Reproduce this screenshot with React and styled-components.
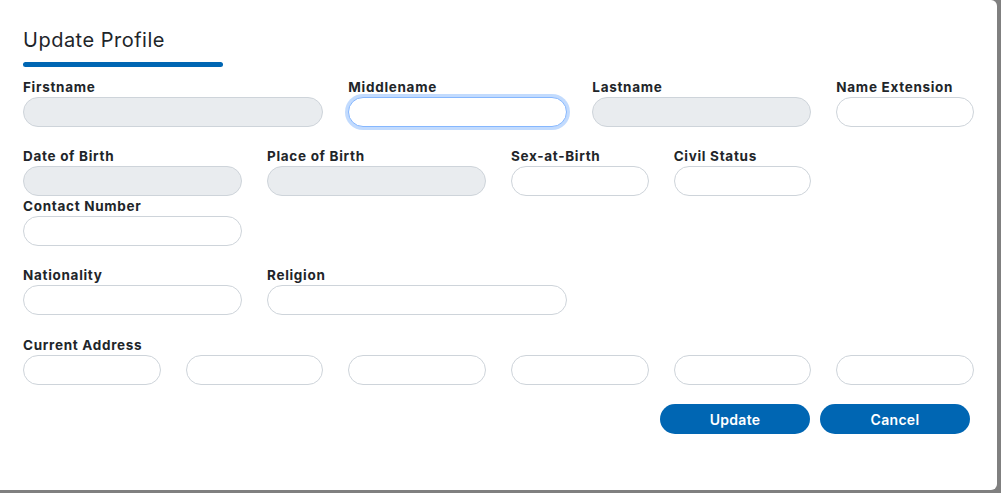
import { createGlobalStyle } from "styled-components";
import styled from "styled-components";

const GlobalStyle = createGlobalStyle`
  html, body {
    margin: 0;
    padding: 0;
    background: #808080;
  }
  body {
    font-family: "Inter", "Noto Sans", sans-serif;
    color: #212529;
  }
`;

export default function App() {
    return (
        <>
            <GlobalStyle />
            <Modal>
                <Title>Update Profile</Title>
                <TitleBar />
                <Form>
                    <Section>
                        <Field $span={4}>
                            <Label>Firstname</Label>
                            <Input disabled />
                        </Field>
                        <Field $span={3}>
                            <Label>Middlename</Label>
                            <Input $focused />
                        </Field>
                        <Field $span={3}>
                            <Label>Lastname</Label>
                            <Input disabled />
                        </Field>
                        <Field $span={2}>
                            <Label>Name Extension</Label>
                            <Input />
                        </Field>
                    </Section>

                    <Section $rowGap={1}>
                        <Field $span={3}>
                            <Label>Date of Birth</Label>
                            <Input disabled />
                        </Field>
                        <Field $span={3}>
                            <Label>Place of Birth</Label>
                            <Input disabled />
                        </Field>
                        <Field $span={2}>
                            <Label>Sex-at-Birth</Label>
                            <Input />
                        </Field>
                        <Field $span={2}>
                            <Label>Civil Status</Label>
                            <Input />
                        </Field>
                        <Field $span={3} $newRow>
                            <Label>Contact Number</Label>
                            <Input />
                        </Field>
                    </Section>

                    <Section>
                        <Field $span={3}>
                            <Label>Nationality</Label>
                            <Input />
                        </Field>
                        <Field $span={4}>
                            <Label>Religion</Label>
                            <Input />
                        </Field>
                    </Section>

                    <Section $top={1}>
                        <Field $span={12}>
                            <Label>Current Address</Label>
                        </Field>
                        {[0, 1, 2, 3, 4, 5].map((i) => (
                            <Field key={i} $span={2}>
                                <Input />
                            </Field>
                        ))}
                    </Section>
                </Form>
                <Actions>
                    <Button>Update</Button>
                    <Button>Cancel</Button>
                </Actions>
            </Modal>
        </>
    );
}

const Modal = styled.div`
  box-sizing: border-box;
  width: 997px;
  height: 490px;
  background: #fff;
  border-radius: 0 6px 6px 0;
  padding: 24px 26px 0 23px;
`;

const Title = styled.h2`
  margin: 0;
  font-size: 20px;
  font-weight: 400;
  line-height: 32px;
  letter-spacing: 0.5px;
  color: #212529;
`;

const TitleBar = styled.div`
  width: 200px;
  height: 5px;
  border-radius: 3px;
  background: #0066b3;
  margin-top: 6px;
`;

const Form = styled.div`
  display: flex;
  flex-direction: column;
  gap: 20px;
  margin-top: 11px;
`;

const Section = styled.div`
  display: grid;
  grid-template-columns: repeat(12, 1fr);
  column-gap: 25px;
  row-gap: ${(p) => p.$rowGap || 0}px;
  margin-top: ${(p) => p.$top || 0}px;
  width: 951px;
`;

const Field = styled.div`
  grid-column: ${(p) => (p.$newRow ? "1 / " : "")}span ${(p) => p.$span};
  display: flex;
  flex-direction: column;
`;

const Label = styled.label`
  font-size: 13.5px;
  font-weight: 700;
  line-height: 17px;
  letter-spacing: 0.7px;
  padding-top: 1px;
  margin-bottom: 1px;
  color: #212529;
  white-space: nowrap;
`;

const Input = styled.input`
  box-sizing: border-box;
  width: 100%;
  height: 30px;
  border-radius: 15px;
  border: 1px solid ${(p) => (p.$focused ? "#86b7fe" : "#ced4da")};
  background: ${(p) => (p.disabled ? "#e9ecef" : "#fff")};
  box-shadow: ${(p) => (p.$focused ? "0 0 0 3px rgba(13, 110, 253, 0.25)" : "none")};
  outline: none;
  padding: 0 12px;
  font: inherit;
`;

const Actions = styled.div`
  display: flex;
  justify-content: flex-end;
  gap: 10px;
  width: 947px;
  margin-top: 19px;
`;

const Button = styled.button`
  width: 150px;
  height: 30px;
  border: none;
  border-radius: 15px;
  background: #0066b3;
  color: #fff;
  font-family: inherit;
  font-size: 14px;
  font-weight: 600;
  letter-spacing: 0.3px;
  cursor: pointer;
`;
